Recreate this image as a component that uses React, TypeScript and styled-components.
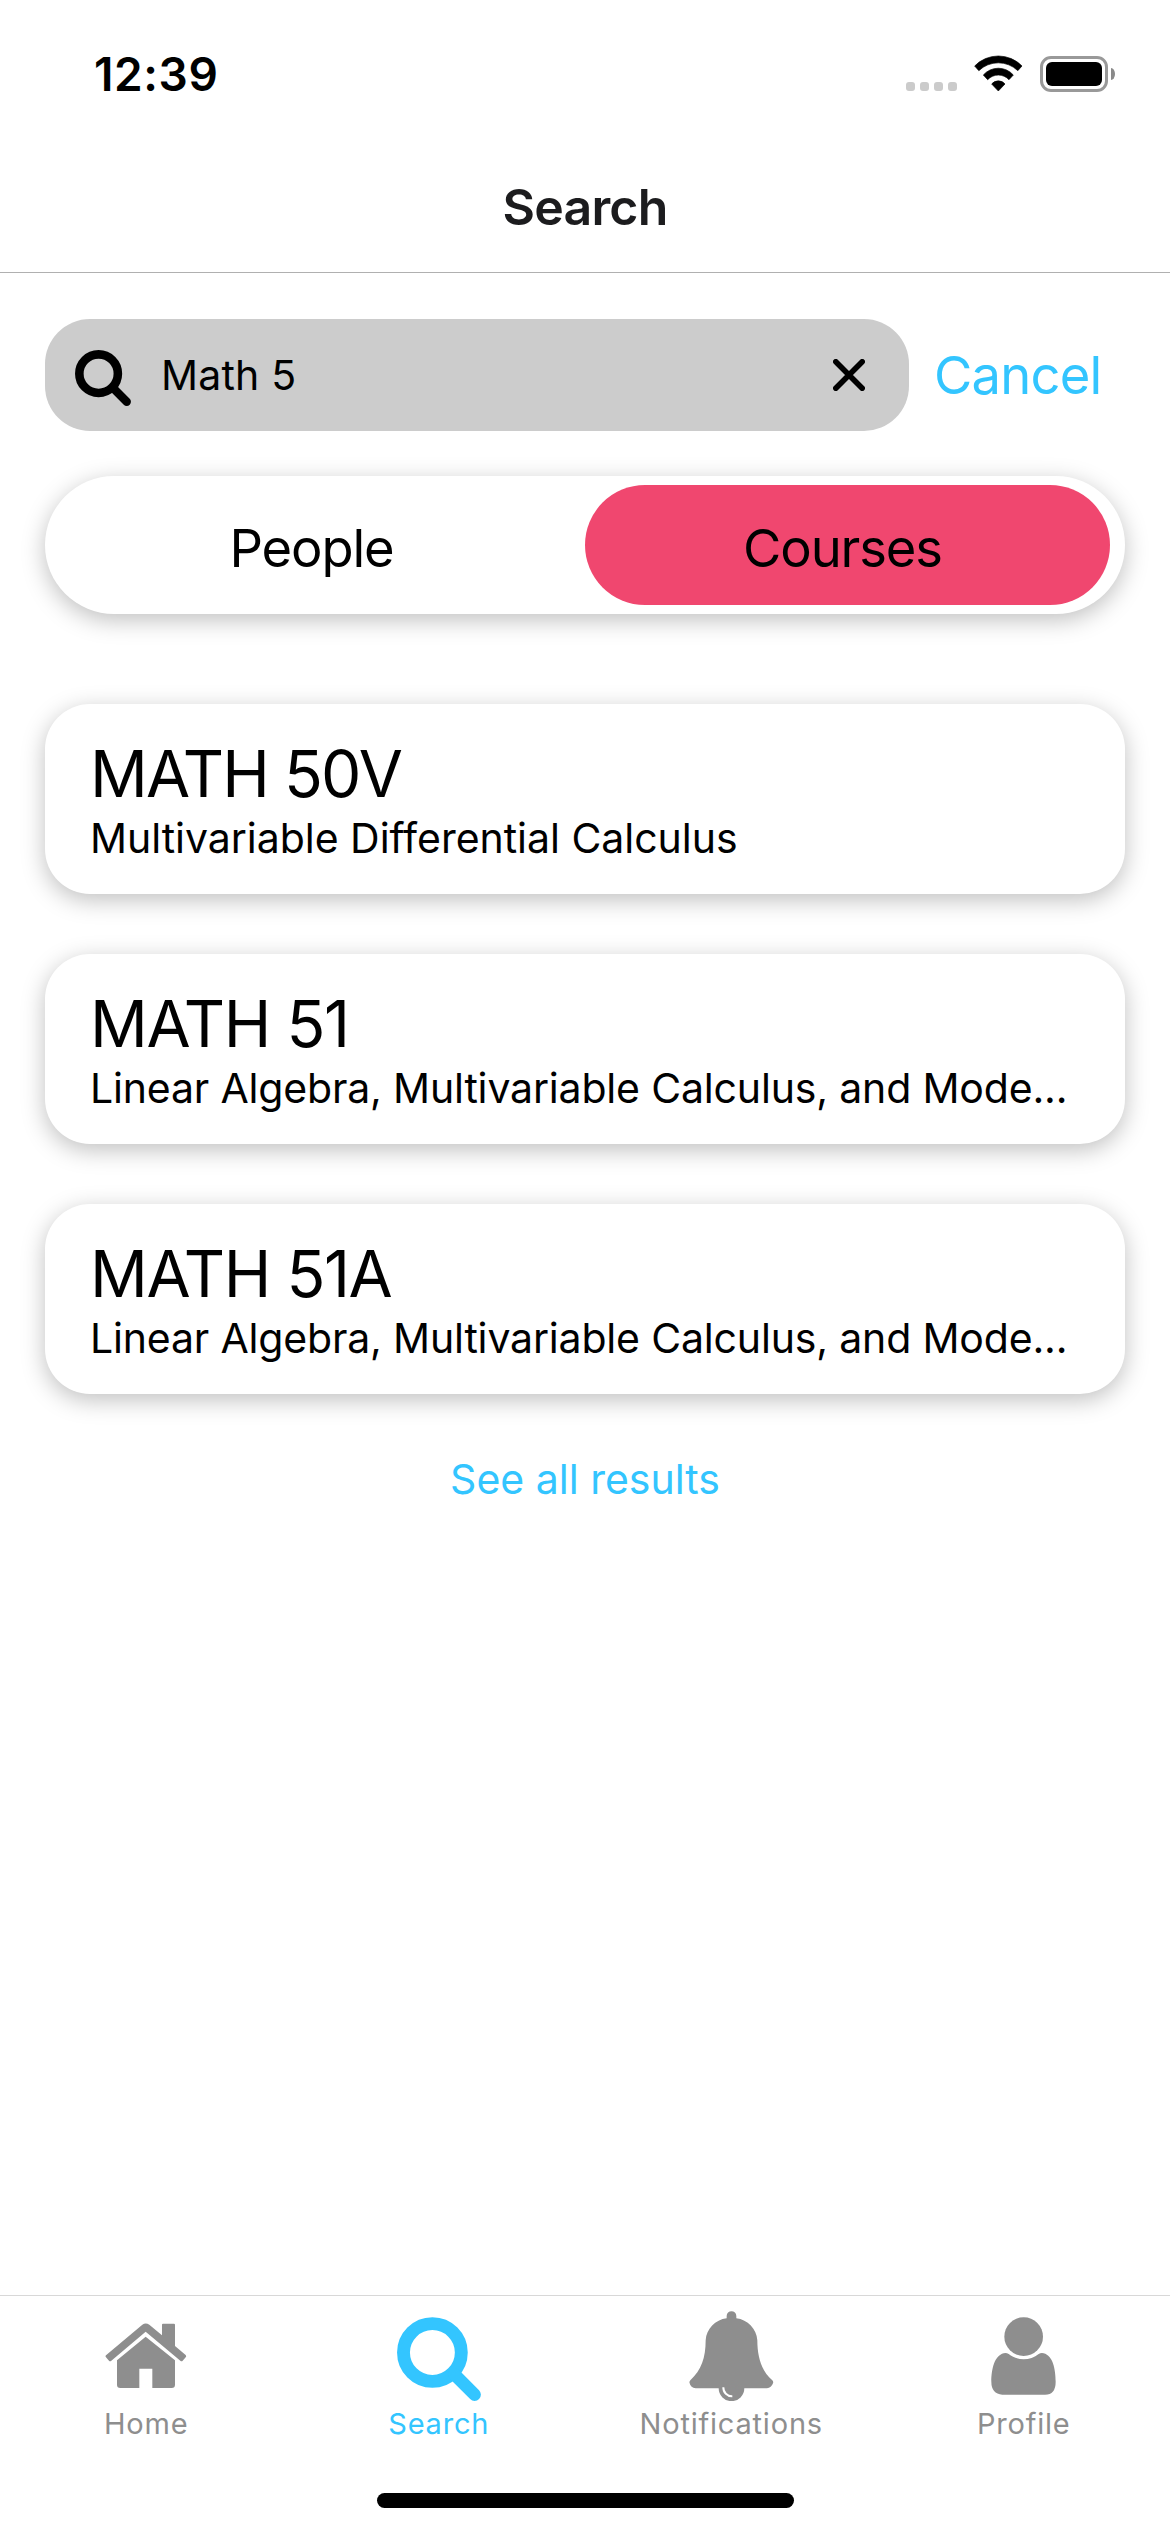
import React from 'react';
import styled, { createGlobalStyle } from 'styled-components';

const colors = {
  accent: '#33c5ff',
  pink: '#f0476f',
  muted: '#8e8e8e',
};

const GlobalStyle = createGlobalStyle`
  *, *::before, *::after { box-sizing: border-box; }
  body {
    margin: 0;
    background: #fff;
    color: #000;
    font-family: Inter, Roboto, "Liberation Sans", sans-serif;
  }
  svg { display: block; flex: none; }
`;

const Screen = styled.div`
  display: flex;
  flex-direction: column;
  width: 1170px;
  height: 2532px;
  overflow: hidden;
`;

const StatusBar = styled.div`
  display: flex;
  justify-content: space-between;
  align-items: flex-start;
  height: 141px;
  padding: 55px 55px 0 94px;
`;

const Clock = styled.time`
  font-size: 46px;
  font-weight: 600;
  line-height: 38px;
  letter-spacing: 0.6px;
`;

const StatusIcons = styled.div`
  display: flex;
  align-items: flex-end;
  height: 37px;
`;

const SignalDots = styled.div`
  display: flex;
  gap: 5px;
  margin: 0 17px 1px 0;
`;

const SignalDot = styled.i`
  width: 9px;
  height: 9px;
  border-radius: 3px;
  background: #cbcbcb;
`;

const Battery = styled.div`
  display: flex;
  width: 68px;
  height: 36px;
  margin-left: 17px;
  padding: 3px;
  border: 3px solid #999;
  border-radius: 11px;
`;

const BatteryLevel = styled.div`
  flex: 1;
  border-radius: 6px;
  background: #000;
`;

const BatteryNub = styled.div`
  align-self: center;
  width: 4px;
  height: 12px;
  margin-left: 3px;
  border-radius: 0 4px 4px 0 / 0 6px 6px 0;
  background: #8a8a8a;
`;

const Header = styled.header`
  display: flex;
  align-items: center;
  justify-content: center;
  height: 132px;
  border-bottom: 1px solid #b0b0b0;
`;

const Title = styled.h1`
  margin: 0;
  color: #1c1c1e;
  font-size: 50px;
  font-weight: 600;
  line-height: 60px;
  letter-spacing: -0.8px;
`;

const Content = styled.main`
  display: flex;
  flex-direction: column;
  padding: 46px 45px 0;
`;

const SearchRow = styled.div`
  display: flex;
  align-items: center;
  gap: 25px;
`;

const SearchBox = styled.div`
  display: flex;
  align-items: center;
  width: 864px;
  height: 112px;
  padding: 0 44px 0 30px;
  border-radius: 45px;
  background: #ccc;
`;

const GlassSlot = styled.span`
  margin: 6px 30px 0 0;
`;

const Query = styled.span`
  flex: 1;
  padding-bottom: 1px;
  font-size: 41px;
  line-height: 50px;
  letter-spacing: 0.2px;
`;

const Cancel = styled.a`
  color: ${colors.accent};
  font-size: 52.5px;
  line-height: 64px;
  letter-spacing: -0.8px;
`;

const raised = '0 6px 23px rgba(0, 0, 0, 0.25)';

const Segments = styled.div`
  display: flex;
  height: 138px;
  margin-top: 45px;
  padding: 9px 15px;
  border-radius: 69px;
  background: #fff;
  box-shadow: ${raised};
`;

const Segment = styled.button<{ $active?: boolean }>`
  flex: 1 1 0;
  padding: 6px ${(p) => (p.$active ? 10 : 22)}px 0 0;
  border: 0;
  border-radius: 60px;
  background: ${(p) => (p.$active ? colors.pink : 'transparent')};
  color: #000;
  font-family: inherit;
  font-size: 52.5px;
  line-height: 64px;
  letter-spacing: -1.1px;
  min-width: 525px;
`;

const Results = styled.div`
  display: flex;
  flex-direction: column;
  gap: 60px;
  margin-top: 90px;
`;

const Card = styled.article`
  height: 190px;
  padding: 30px 45px 0;
  border-radius: 45px;
  background: #fff;
  box-shadow: ${raised};
  white-space: nowrap;
`;

const CourseCode = styled.div<{ $tracking: number }>`
  font-size: 64px;
  line-height: 79px;
  letter-spacing: ${(p) => p.$tracking}px;
`;

const CourseName = styled.div<{ $tracking: number }>`
  font-size: 41px;
  line-height: 50px;
  letter-spacing: ${(p) => p.$tracking}px;
`;

const SeeAll = styled.a`
  align-self: center;
  margin-top: 60px;
  color: ${colors.accent};
  font-size: 41px;
  line-height: 50px;
`;

const TabBar = styled.nav`
  display: flex;
  flex-direction: column;
  align-items: center;
  height: 237px;
  margin-top: auto;
  border-top: 1px solid #d8d8d8;
`;

const Tabs = styled.div`
  display: grid;
  grid-template-columns: repeat(4, 1fr);
  width: 100%;
  padding-top: 14px;
`;

const Tab = styled.a<{ $active?: boolean }>`
  display: flex;
  flex-direction: column;
  align-items: center;
  gap: 4px;
  color: ${(p) => (p.$active ? colors.accent : colors.muted)};
  font-size: 29px;
  line-height: 35px;
  letter-spacing: 0.8px;
`;

const TabIcon = styled.span<{ $drop?: number }>`
  display: flex;
  align-items: center;
  height: 92px;
  padding-top: ${(p) => p.$drop ?? 0}px;
`;

const HomeIndicator = styled.div`
  width: 417px;
  height: 15px;
  margin-top: 52px;
  border-radius: 8px;
  background: #000;
`;

const WifiIcon = () => (
  <svg width="48.67" height="36.67" viewBox="344 74 146 110" fill="#000" stroke="#000" strokeWidth="2" strokeLinejoin="round">
    <path d="M346 107A99 99 0 0 1 488 107L475.500 121A84.500 84.500 0 0 0 358.500 121Z" />
    <path d="M372 134A60 60 0 0 1 462 134L449 148A44 44 0 0 0 385 148Z" />
    <path d="M397 161A26 26 0 0 1 437 161L417 182Z" />
  </svg>
);

const MagnifierIcon = ({ size }: { size: number }) => (
  <svg width={size} height={size} viewBox="0 0 84 84" fill="none" stroke="currentColor">
    <circle cx="35.400" cy="35.500" r="28.900" strokeWidth="12.900" />
    <path d="M57.500 57.500L77.600 77.600" strokeWidth="12.600" strokeLinecap="round" />
  </svg>
);

const ClearIcon = () => (
  <svg width="32" height="32" viewBox="0 0 32 32" fill="none" stroke="#000" strokeWidth="5.600" strokeLinecap="round">
    <path d="M2.800 2.800L29.200 29.200M29.200 2.800L2.800 29.200" />
  </svg>
);

const HomeIcon = () => (
  <svg width="81.67" height="65.33" viewBox="75 129 245 196" fill="currentColor">
    <path d="M78 226L187 134Q197 127 208 134L246 166V134Q246 131 249 131H282Q285 131 285 134V198L317 225Q320 229 317 232L308 242Q305 245 301 242L197 155L94 242Q90 245 87 242L78 232Q75 229 78 226Z" />
    <path d="M197 170L285 241V314Q285 324 275 324H217V266H178V324H121Q111 324 111 314V241Z" />
  </svg>
);

const BellIcon = () => (
  <svg width="84.67" height="90.67" viewBox="206 92 254 272" fill="currentColor">
    <path d="M319 114V107A14.500 14.500 0 0 1 348 107V114C382 118 409 146 411 180C411 232 425 274 456 300Q460 304 458 309Q453 323 440 324H372A38.500 38.500 0 0 1 295 324H226Q211 323 208 309Q206 304 210 300C243 270 256 232 256 180C258 146 285 118 319 114Z" />
    <path d="M309 321A26 26 0 0 0 336 348" fill="none" stroke="#fff" strokeWidth="6" />
  </svg>
);

const PersonIcon = () => (
  <svg width="65.33" height="78.33" viewBox="1112 110 196 235" fill="currentColor">
    <circle cx="1210" cy="169" r="58" />
    <path d="M1150 219Q1158 217 1165 221C1190 242 1230 242 1255 221Q1262 217 1270 219C1298 226 1306 268 1306 304Q1306 343 1274 343H1146Q1113 340 1113 304C1113 268 1122 226 1150 219Z" />
  </svg>
);

const courses = [
  { code: 'MATH 50V', name: 'Multivariable Differential Calculus', codeTracking: -1.9, nameTracking: -0.03 },
  { code: 'MATH 51', name: 'Linear Algebra, Multivariable Calculus, and Mode...', codeTracking: -1.4, nameTracking: -0.17 },
  { code: 'MATH 51A', name: 'Linear Algebra, Multivariable Calculus, and Mode...', codeTracking: -1.4, nameTracking: -0.17 },
];

const tabs = [
  { label: 'Home', icon: <HomeIcon /> },
  { label: 'Search', icon: <MagnifierIcon size={84} />, active: true, drop: 6 },
  { label: 'Notifications', icon: <BellIcon /> },
  { label: 'Profile', icon: <PersonIcon /> },
];

export default function App() {
  return (
    <Screen>
      <GlobalStyle />
      <StatusBar>
        <Clock>12:39</Clock>
        <StatusIcons>
          <SignalDots>
            <SignalDot />
            <SignalDot />
            <SignalDot />
            <SignalDot />
          </SignalDots>
          <WifiIcon />
          <Battery>
            <BatteryLevel />
          </Battery>
          <BatteryNub />
        </StatusIcons>
      </StatusBar>
      <Header>
        <Title>Search</Title>
      </Header>
      <Content>
        <SearchRow>
          <SearchBox>
            <GlassSlot>
              <MagnifierIcon size={56} />
            </GlassSlot>
            <Query>Math 5</Query>
            <ClearIcon />
          </SearchBox>
          <Cancel>Cancel</Cancel>
        </SearchRow>
        <Segments>
          <Segment>People</Segment>
          <Segment $active>Courses</Segment>
        </Segments>
        <Results>
          {courses.map((c) => (
            <Card key={c.code}>
              <CourseCode $tracking={c.codeTracking}>{c.code}</CourseCode>
              <CourseName $tracking={c.nameTracking}>{c.name}</CourseName>
            </Card>
          ))}
        </Results>
        <SeeAll>See all results</SeeAll>
      </Content>
      <TabBar>
        <Tabs>
          {tabs.map((t) => (
            <Tab key={t.label} $active={t.active}>
              <TabIcon $drop={t.drop}>{t.icon}</TabIcon>
              {t.label}
            </Tab>
          ))}
        </Tabs>
        <HomeIndicator />
      </TabBar>
    </Screen>
  );
}
